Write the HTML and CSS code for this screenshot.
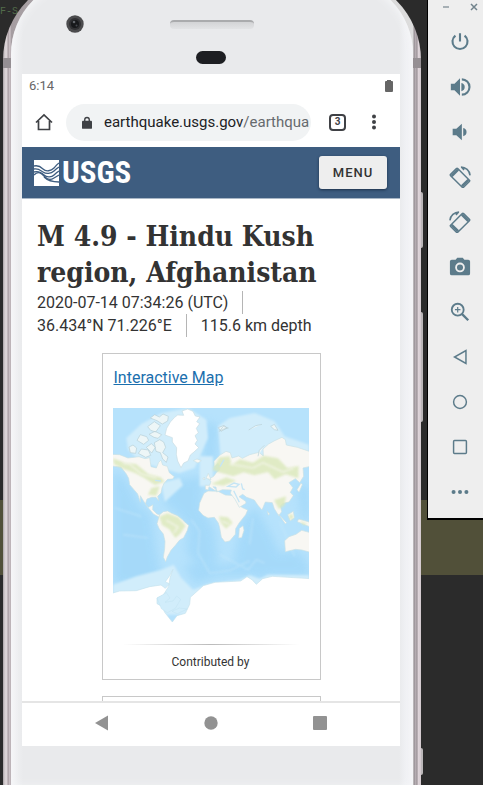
FILE: index.html
```html
<!DOCTYPE html>
<html lang="en">
<head>
<meta charset="utf-8">
<meta name="viewport" content="width=device-width, initial-scale=1">
<title>M 4.9 - Hindu Kush region, Afghanistan</title>
<link rel="stylesheet" href="styles.css">
</head>
<body>
<div class="desktop">
  <div class="code-line" aria-hidden="true">F-S</div>
  <div class="phone">
    <span class="side-button power"></span>
    <span class="side-button volume"></span>
    <span class="side-button lower"></span>
    <div class="face">
      <div class="bezel">
        <svg class="camera" viewBox="0 0 18 18" aria-hidden="true"><circle cx="9" cy="9" r="8.7" fill="#4b4b4d"/><circle cx="9" cy="9" r="6" fill="#303033"/><circle cx="9" cy="9" r="4" fill="#17181b"/><circle cx="8" cy="7" r="1.3" fill="#62656b"/><circle cx="10.500" cy="10.500" r="1" fill="#45484e"/></svg>
        <span class="speaker"></span>
        <span class="sensor"></span>
      </div>
      <div class="screen">
        <div class="status">
          <span>6:14</span>
          <svg width="8" height="12" viewBox="0 0 8 12" aria-hidden="true"><path d="M2 0h4v1h1q1 0 1 1v9q0 1-1 1H1q-1 0-1-1V2q0-1 1-1h1z" fill="#666"/></svg>
        </div>
        <div class="browser">
          <button class="icon-button" aria-label="Home"><svg width="18" height="18" viewBox="0 0 18 18"><path d="M1 9.500 9 2l8 7.500M3.500 8v8.500h11V8" fill="none" stroke="#3f4145" stroke-width="1.700"/></svg></button>
          <a class="address" href="#event">
            <svg width="10" height="13" viewBox="0 0 11 14" aria-hidden="true"><path d="M3 6V4a2.500 2.500 0 0 1 5 0v2" fill="none" stroke="#3f4145" stroke-width="1.500"/><rect x="0" y="5" width="11" height="9" rx="1" fill="#3f4145"/></svg>
            <span class="url">earthquake.usgs.gov<span class="path">/earthqua</span></span>
          </a>
          <button class="tabs" aria-label="3 tabs">3</button>
          <button class="icon-button more" aria-label="More"><svg width="6" height="16" viewBox="0 0 6 16" fill="#3f4145"><circle cx="3" cy="2.500" r="2"/><circle cx="3" cy="8" r="2"/><circle cx="3" cy="13.500" r="2"/></svg></button>
        </div>
        <header class="site-header">
          <a class="logo" href="#event" aria-label="USGS">
            <svg width="25" height="26" viewBox="0 0 25 26" aria-hidden="true"><path d="M0 0h25v26H0z" fill="#fff"/><g fill="none" stroke="#3e5d80" stroke-width="1.300"><path d="M0 6c4-1 6 0 9 3s8 2 11-1 3-4 5-5"/><path d="M0 9c4-1 6 1 9 3s8 2 11-1 3-3 5-4"/><path d="M0 12c4-1 7 0 10 3s8 2 10 0 3-3 5-4"/><path d="M0 15c5-5 8-1 11 2s6 3 9 1l5-3"/><path d="M10 17c4 4 9 5 15 5"/></g></svg>
            <span>USGS</span>
          </a>
          <button class="menu">MENU</button>
        </header>
        <main id="event">
          <h1>M 4.9 - Hindu Kush region, Afghanistan</h1>
          <ul class="meta"><li>2020-07-14 07:34:26 (UTC)</li><li>36.434°N 71.226°E</li><li>115.6 km depth</li></ul>
          <section class="card">
            <a class="card-title" href="#map">Interactive Map</a>
            <svg id="map" class="map" viewBox="0 0 588 684" role="img" aria-label="World map">
              <defs><filter id="soft" x="-20%" y="-20%" width="140%" height="140%"><feGaussianBlur stdDeviation="12"/></filter><filter id="edge"><feGaussianBlur stdDeviation="3"/></filter>
              <clipPath id="mapclip"><path d="M0 0h588v684H0z"/></clipPath></defs>
              <g clip-path="url(#mapclip)">
              <path d="M0 0h588v684H0z" fill="#b6e2fc"/>
              <g fill="#a1d8f9" opacity=".8" filter="url(#soft)"><path d="M0 190 40 215 75 285 115 320 130 430 145 500 90 550 0 520zM180 215 270 205 265 300 305 365 315 455 280 500 220 435 225 350 150 280zM276 40 314 50 310 155 270 180zM390 330 430 300 475 380 505 450 455 515 370 490 365 440zM555 235h33v90l-20 20zM210 470h130l210-45 38 45v34H320l-75 25z"/></g>
              <g fill="#d1edfb" filter="url(#edge)"><path d="M45 125 40 90 85 48 145 15 225 0 280 35 285 90 245 180 200 195 140 180 80 160zM315 55 350 30 425 15 485 40 515 85 588 110V170H325zM0 530 70 505 145 485 182 470 205 510 240 545 285 529 380 515 410 502 440 512 465 500 588 502V620H0z"/><path d="M260 145h40v90h-40zM145 225l55-15 10 22-55 50z"/></g>
              <g fill="none" stroke="#c8e9fb" stroke-width="5" opacity=".45" filter="url(#edge)"><path d="M235 335l25 35-5 65 35 60 60-7 60-30M320 440l85 45 25-30 25 10M5 300l80 25M30 380l75 10M500 340l20 45 25 60M420 330l-10 80"/></g>
              <g fill="#f8f7f3" stroke="#c9e1e6" stroke-width="2" stroke-linejoin="round">
              <path d="M-4 139 20 140 45 150 78 146 96 152 110 149 114 176 130 180 137 163 144 156 149 171 163 175 169 194 184 206 179 213 164 214 153 226 147 240 144 255 134 265 137 278 129 268 116 268 102 273 97 288 106 298 120 290 119 305 132 318 145 322 139 328 121 318 104 297 91 278 82 263 82 283 74 258 63 245 50 230 47 211 40 198 24 177 -4 174z"/>
              <path d="M140 320 151 311 164 309 176 316 193 323 207 334 218 345 227 352 223 367 212 389 199 397 188 411 174 427 163 447 158 461 151 448 155 422 156 400 151 378 139 363 132 347z"/>
              <path d="M273 256 285 249 315 250 337 261 367 263 374 282 386 298 404 306 398 320 379 344 368 362 367 379 350 399 336 402 325 388 320 359 316 345 304 328 285 330 270 322 257 307 260 285zM379 361l11-8 3 14-7 22-9 1z"/>
              <path d="M277 244 277 232 290 232 294 220 287 214 302 205 311 193 319 187 321 175 315 166 304 177 303 160 320 142 339 130 352 134 357 150 377 144 388 151 410 140 438 133 451 144 450 123 467 108 485 98 507 88 517 95 520 111 553 118 592 131V175L570 180 572 205 560 224 547 212 528 224 540 239 532 253 541 263 528 282 510 286 502 293 506 311 497 323 484 302 478 284 457 282 447 306 434 291 424 276 401 268 389 259 378 266 398 280 399 286 379 298 366 274 352 256 355 246 328 245 311 252 309 237 300 236 314 250 304 246 288 236 286 246z"/>
              <path d="M515 398 528 386 549 379 566 367 592 374V433L567 426 548 424 517 431z"/>
              <path d="M463 310l7 8-4 4zM497 319l24 25-4 4zM524 320l17-10 3 19-12 9zM557 333l35 10v14l-39-16zM552 245l12-20 4 5-10 23zM279 211l7-15 8 19zM269 213l5-6 2 8zM241 158l11-5 13 5-10 7z"/>
              <g fill="#edf6f7" stroke="#b6cfd6"><path d="M52 134 48 117 60 111 71 120 68 136zM72 97 82 80 101 86 107 97 92 109zM76 136 85 123 106 126 113 142 98 148zM104 56 124 41 142 53 128 72 113 67zM108 79 126 70 146 80 135 91 123 88zM112 30 125 20 139 27 150 18 166 25 164 39 148 48 132 38zM124 104 140 95 152 102 158 118 149 134 165 147 160 163 149 153 142 134 129 130zM100 118l15-11 12 11-11 17zM319 70l12-15 15 5-17 4zM316 59l17-7 9 8-18 10zM407 66l21-13 19-4M473 55l11-6 11 18-11-2zM435 145l4-18 15-15"/></g>
              </g>
              <path d="M156 81 161 61 172 42 185 28 194 21 212 22 207 9 224 3 240 10 247 24 261 27 251 41 260 47 250 61 256 74 246 83 253 97 246 108 257 119 243 132 232 141 225 159 212 165 204 179 194 159 190 139 191 119 178 102 178 89z" fill="#fff" stroke="#c9dce2" stroke-width="2"/>
              <path d="M-4 556 20 549 70 548 110 536 144 531 157 541 170 528 157 521 170 503 180 484 171 510 167 535 151 561 132 570 132 587 148 596 155 613 178 642 192 623 217 616 230 589 232 568 271 533 306 523 383 519 402 506 417 515 430 529 449 512 478 505 592 512V688H-4z" fill="#fff" stroke="#c5e2ed" stroke-width="2"/>
              <path d="M132 570l28-16 11 16-15 13 24-4 11-15 12 10-16 27-24 13-18-12zM177 610l22-10 24 3-30 14z" fill="#d1edfb" stroke="#badeec"/>
              <g fill="#dce9bd" opacity=".85" filter="url(#edge)"><path d="M0 151 37 165 69 168 106 198 143 208 155 221 126 231 95 211 66 195 34 184 3 169zM139 326 163 316 196 328 218 353 202 377 187 390 169 364 147 351zM318 325 345 328 359 344 339 362 323 344zM298 185 319 148 350 145 356 171 381 154 420 164 452 143 495 151 523 180 557 174 556 211 518 199 485 214 465 192 424 202 392 193 361 205 315 192zM483 276 519 265 515 292 498 304zM528 321l10-3 3 13-10 5zM560 338l24 10-13 3zM294 228l46-20 30 10-39 15zM115 240l25-5-10 28-25-3z"/></g>
              <g fill="none" stroke="#f7f7ef" stroke-width="5" opacity=".7" filter="url(#edge)"><path d="M30 166l20 2 35 30 45 11M160 337l35 20-12 18M350 168l70 12 30-16 60 28 32-12M325 340l24 8"/></g>
              <g fill="none" stroke="#c5e5f5" stroke-width="4"><path d="M321 176l12-21M345 235l18-10 15 4-9 8zM385 226l4 17 6 2M362 248l17 35M126 217l18 2"/></g>
              </g>
            </svg>
            <p class="credit">Contributed by</p>
          </section>
          <section class="card"></section>
        </main>
        <nav class="android-nav" aria-label="System navigation">
          <button aria-label="Back"><svg width="16" height="16" viewBox="0 0 16 16"><path d="M14 .5v15L1 8z" fill="#929292"/></svg></button>
          <button aria-label="Home screen"><svg width="16" height="16" viewBox="0 0 16 16"><circle cx="8" cy="8" r="6.700" fill="#929292"/></svg></button>
          <button aria-label="Recent apps"><svg width="16" height="16" viewBox="0 0 16 16"><rect x="1" y="1" width="14" height="14" rx="1" fill="#929292"/></svg></button>
        </nav>
      </div>
    </div>
  </div>
  <aside class="toolbar">
    <div class="window-controls">
      <button aria-label="Minimize"><svg width="8" height="10" viewBox="0 0 8 10"><path d="M1 5h6" stroke="#8e9aa1" stroke-width="1.500"/></svg></button>
      <button aria-label="Close"><svg width="8" height="10" viewBox="0 0 8 10"><path d="m1 2 6 6M7 2 1 8" stroke="#71838c" stroke-width="1.500"/></svg></button>
    </div>
    <button aria-label="Power"><svg viewBox="0 0 24 24"><path d="M12 2.500v9M7 5a8.200 8.200 0 1 0 10 0" fill="none" stroke="#5c7b8a" stroke-width="2.300"/></svg></button>
    <button aria-label="Volume up"><svg viewBox="0 0 24 24" fill="#5c7b8a"><path d="M2 8.500v7h4l6 6v-19l-6 6zM13.500 7.500v9a4.600 4.600 0 0 0 0-9zM14 2.500v2.300a7.200 7.200 0 0 1 0 14.400v2.300a9.500 9.500 0 0 0 0-19z"/></svg></button>
    <button aria-label="Volume down"><svg viewBox="0 0 24 24" fill="#5c7b8a"><path d="M4 8.500v7h4l6 5.500V3L8 8.500zM15.500 7.500v9a4.600 4.600 0 0 0 0-9z"/></svg></button>
    <button aria-label="Rotate left"><svg viewBox="0 0 24 24" fill="none" stroke="#5c7b8a"><g transform="rotate(-45 12 13)"><rect x="6.500" y="3" width="11" height="20" rx="1" stroke-width="1.600"/><path d="M7 5h10M7 21h10" stroke-width="3"/></g><path d="M13 1.200a10 10 0 0 1 10 9M13.500 1.200l3 3" stroke-width="1.700"/></svg></button>
    <button aria-label="Rotate right"><svg viewBox="0 0 24 24" fill="none" stroke="#5c7b8a"><g transform="rotate(45 12 13)"><rect x="6.500" y="3" width="11" height="20" rx="1" stroke-width="1.600"/><path d="M7 5h10M7 21h10" stroke-width="3"/></g><path d="M11 1.200a10 10 0 0 0-10 9M10.500 1.200l-3 3" stroke-width="1.700"/></svg></button>
    <button aria-label="Take screenshot"><svg viewBox="0 0 24 24"><path d="M9 2 7.200 4H3a2 2 0 0 0-2 2v13a2 2 0 0 0 2 2h18a2 2 0 0 0 2-2V6a2 2 0 0 0-2-2h-4.200L15 2z" fill="#5c7b8a"/><circle cx="12" cy="12.500" r="4.300" fill="none" stroke="#eee" stroke-width="2"/></svg></button>
    <button aria-label="Zoom"><svg viewBox="0 0 24 24" fill="none" stroke="#5c7b8a"><circle cx="9.500" cy="9.500" r="6.500" stroke-width="2"/><path d="m14 14 7 7" stroke-width="2.500"/><path d="M9.500 6.500v6M6.500 9.500h6" stroke-width="1.300"/></svg></button>
    <button aria-label="Back key"><svg viewBox="0 0 24 24"><path d="M18.500 5v14L6 12z" fill="none" stroke="#5c7b8a" stroke-width="1.600"/></svg></button>
    <button aria-label="Home key"><svg viewBox="0 0 24 24"><circle cx="12" cy="12" r="7" fill="none" stroke="#5c7b8a" stroke-width="1.600"/></svg></button>
    <button aria-label="Overview key"><svg viewBox="0 0 24 24"><rect x="5" y="5" width="14" height="14" rx="1" fill="none" stroke="#5c7b8a" stroke-width="1.600"/></svg></button>
    <button aria-label="More options"><svg viewBox="0 0 24 24" fill="#5c7b8a"><circle cx="5" cy="12" r="2.200"/><circle cx="12" cy="12" r="2.200"/><circle cx="19" cy="12" r="2.200"/></svg></button>
  </aside>
</div>
</body>
</html>
```

FILE: styles.css
```css
* { box-sizing: border-box; }
body { margin: 0; font-family: Roboto, "Liberation Sans", sans-serif; color: #333; }
button { padding: 0; border: 0; background: none; font: inherit; color: inherit; display: grid; place-items: center; }
svg { display: block; }

.desktop {
  position: relative;
  display: flex;
  align-items: flex-start;
  height: 100vh;
  overflow: hidden;
  padding-left: 3px;
  background: linear-gradient(#2b2b2b 500px, #515039 500px, #515039 575px, #2b2b2b 575px);
}
.code-line { position: absolute; top: 4px; left: 0; color: #526b4a; font: 10px/16px "Liberation Mono", monospace; }

/* Handset */
.phone {
  position: relative;
  flex: 1;
  min-width: 0;
  height: calc(100vh + 24px);
  margin-top: -24px;
  margin-right: 6px;
  padding: 2px 8px 0;
  border-radius: 84px 84px 0 0;
  background: linear-gradient(90deg, #aaa4a7 0, #d8d0d3 2px, #ddd5d8 4px, #a59a9f 5px, #d5cbd0 7px, #a59da1 8px, #ddd calc(100% - 8px), #958e93 calc(100% - 7px), #bfb6bb calc(100% - 5px), #8d858a calc(100% - 4px), #e0d6db calc(100% - 3px), #d2c9ce);
}
.phone::before, .phone::after { content: ""; position: absolute; top: 82px; width: 8px; height: 10px; background: #958f93; }
.phone::before { left: 0; }
.phone::after { right: 0; }
.side-button { position: absolute; left: 100%; width: 2px; border-radius: 0 2px 2px 0; background: #bbb7b9; }
.power { top: 216px; height: 56px; }
.volume { top: 336px; height: 110px; }
.lower { top: 772px; height: 27px; }
.face {
  display: flex;
  flex-direction: column;
  height: 100%;
  padding: 0 13px 39px 11px;
  border-radius: 76px 76px 0 0;
  background: linear-gradient(90deg, #f5f5f7, #eeeff1 6px, #e9eaec 12px, #e9eaec calc(100% - 14px), #eff0f3 calc(100% - 8px), #f3f3f6);
  box-shadow: inset 0 2px 10px #f6f7f9;
}
.bezel { position: relative; flex: 0 0 96px; }
.camera { position: absolute; left: 44px; top: 37px; width: 18px; height: 18px; }
.speaker { position: absolute; left: calc(50% - 41px); top: 42px; width: 84px; height: 9px; border-top: 2px solid #aaabad; border-radius: 4px; background: linear-gradient(#d3d4d6, #e2e3e5); }
.sensor { position: absolute; left: calc(50% - 15px); top: 73px; width: 30px; height: 13px; border-radius: 7px; background: #1d1e22; }
.screen { flex: 1; min-height: 0; display: flex; flex-direction: column; background: #fff; }

/* Browser chrome */
.status { display: flex; align-items: center; justify-content: space-between; height: 23px; padding: 0 7px; font-size: 13px; color: #666; }
.browser { display: flex; align-items: center; height: 50px; padding: 0 16px 0 12px; }
.icon-button { flex: none; width: 20px; height: 36px; }
.address { flex: 1; min-width: 0; display: flex; align-items: center; gap: 12px; height: 37px; margin: 0 18px 0 12px; padding: 0 1px 0 16px; border-radius: 19px; background: #f1f3f4; color: #202124; text-decoration: none; }
.address svg { flex: none; }
.url { overflow: hidden; white-space: nowrap; font-size: 15px; line-height: 20px; }
.path { color: #666a6e; }
.tabs { flex: none; width: 17px; height: 17px; border: 2px solid #3f4145; border-radius: 4px; font-size: 10px; font-weight: 700; line-height: 12px; color: #3f4145; }
.more { margin-left: 18px; }

/* Event page */
.site-header { flex: none; display: flex; align-items: center; justify-content: space-between; height: 52px; padding: 0 13px 0 12px; background: #3e5d80; border-bottom: 1px solid #a9b7c6; }
.logo { display: flex; align-items: center; gap: 3px; color: #fff; text-decoration: none; font: 700 31px/32px "Roboto Condensed", Roboto, sans-serif; }
.menu { width: 68px; height: 33px; border-radius: 3px; background: #eee; box-shadow: 0 1px 3px #1c304a; color: #333; font-size: 13px; font-weight: 500; letter-spacing: 1px; }
main { flex: 1; min-height: 0; overflow: hidden; padding: 20px 15px 0; }
h1 { margin: 0; font: 700 28px/36px "DejaVu Serif Condensed", "Liberation Serif", serif; }
.meta { margin: 0; padding: 0; list-style: none; font-size: 16px; line-height: 23px; }
.meta li { display: inline-block; }
.meta li:not(:last-child) { padding-right: 14px; margin-right: 14px; border-right: 1px solid #b5b5b5; }
.card { width: 219px; min-height: 80px; margin: 16px auto; padding: 12px 11px 7px 10px; border: 1px solid #c8c8c8; }
.card-title { display: block; margin-bottom: 18px; padding-left: 1px; color: #1b6fae; font-size: 16px; line-height: 24px; }
.map { width: 100%; height: auto; }
.credit { margin: 8px 0 0; padding-top: 8px; font-size: 12px; line-height: 20px; text-align: center; background: linear-gradient(90deg, #fff 5%, #bbb 50%, #fff 95%) top / 100% 1px no-repeat; }
.android-nav { flex: none; display: flex; justify-content: center; gap: 93px; height: 45px; border-top: 2px solid #e5e5e5; }
.android-nav button { width: 16px; height: 40px; }

/* Emulator controls */
.toolbar { flex: none; width: 56px; padding-bottom: 4px; border: solid #000; border-width: 0 0 2px 1px; background: #eee; }
.toolbar > button { width: 24px; height: 45px; margin-left: 20px; }
.toolbar > button svg { width: 22px; height: 22px; }
.window-controls { display: flex; justify-content: space-between; height: 19px; padding: 0 5px 0 14px; }
.window-controls button { width: 8px; height: 14px; }
```
